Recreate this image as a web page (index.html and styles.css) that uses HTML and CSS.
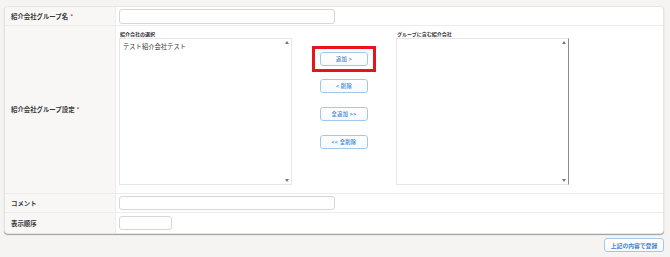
FILE: index.html
```html
<!DOCTYPE html>
<html lang="ja">
<head>
<meta charset="utf-8">
<link rel="stylesheet" href="styles.css">
</head>
<body>
<div class="card">
  <div class="lbl r1">紹介会社グループ名<span class="req">*</span></div>
  <div class="val r1"><div class="input wide"></div></div>

  <div class="lbl r2">紹介会社グループ設定<span class="req">*</span></div>
  <div class="val r2 setting">
    <div class="group">
      <div class="sublbl">紹介会社の選択</div>
      <div class="listbox">
        <div class="items"><div class="item">テスト紹介会社テスト</div></div>
        <div class="sbar"><span class="up"></span><span class="down"></span></div>
      </div>
    </div>
    <div class="mid">
      <div class="hl"><div class="btn">追加 &gt;</div></div>
      <div class="btn b2">&lt; 削除</div>
      <div class="btn b3">全追加 &gt;&gt;</div>
      <div class="btn b3">&lt;&lt; 全削除</div>
    </div>
    <div class="group">
      <div class="sublbl">グループに含む紹介会社</div>
      <div class="listbox dark">
        <div class="items"></div>
        <div class="sbar"><span class="up"></span><span class="down"></span></div>
      </div>
    </div>
  </div>

  <div class="lbl r3">コメント</div>
  <div class="val r3"><div class="input wide short"></div></div>

  <div class="lbl r4 last">表示順序</div>
  <div class="val r4 last"><div class="input small"></div></div>
</div>
<div class="actions"><div class="btn submit">上記の内容で登録</div></div>
</body>
</html>
```
FILE: styles.css
```css
* { box-sizing: border-box; }
body {
  margin: 0;
  background: #f5f4f2;
  font-family: "Noto Sans CJK JP", "Noto Sans", sans-serif;
  color: #333;
}
.card {
  margin: 6px 6px 0 4px;
  background: #fff;
  border: 1px solid #e6e5e3;
  border-radius: 4px;
  box-shadow: 0 1px 1px rgba(0,0,0,0.35);
  display: grid;
  grid-template-columns: 111px 1fr;
  grid-template-rows: 19px 168px 19px 20px;
  overflow: hidden;
}
.lbl {
  background: #f8f7f5;
  border-right: 1px solid #ededed;
  border-bottom: 1px solid #ececec;
  display: flex;
  align-items: center;
  padding-left: 6px;
  font-size: 6.4px;
  font-weight: bold;
  color: #3a3a3a;
}
.req { color: #e04848; margin-left: 2px; font-size: 6px; }
.val {
  border-bottom: 1px solid #ececec;
  display: flex;
  align-items: center;
  padding-left: 3px;
}
.last { border-bottom: none; }
.input {
  border: 1px solid #d6d6d6;
  border-radius: 3px;
  background: #fff;
  height: 15px;
}
.wide { width: 216px; }
.short { height: 14px; }
.small { width: 53px; height: 14px; }

.setting { align-items: flex-start; }
.group { display: flex; flex-direction: column; padding-top: 4px; }
.sublbl {
  font-size: 5px;
  font-weight: bold;
  line-height: 7px;
  height: 8px;
  padding-left: 1px;
  color: #333;
}
.listbox {
  width: 173px;
  height: 147px;
  border: 1px solid #e6e6e6;
  display: flex;
  background: #fff;
}
.listbox.dark { border-right: 1px solid #8c8c8c; }
.items { flex: 1; padding: 3px 0 0 3px; }
.item { font-size: 6.3px; line-height: 9px; color: #333; }
.sbar {
  width: 8px;
  display: flex;
  flex-direction: column;
  justify-content: space-between;
  align-items: center;
  padding: 2px 0 2px;
}
.up, .down {
  width: 0; height: 0;
  border-left: 2.5px solid transparent;
  border-right: 2.5px solid transparent;
}
.up { border-bottom: 3px solid #777; }
.down { border-top: 3px solid #777; }

.mid {
  width: 104px;
  display: flex;
  flex-direction: column;
  align-items: center;
  padding-top: 20px;
}
.hl {
  border: 3px solid #e8141c;
  padding: 3px 5px;
  width: 64px;
  height: 26px;
}
.btn {
  width: 48px;
  height: 14px;
  border: 1px solid #a3c9ea;
  border-radius: 3px;
  background: linear-gradient(#ffffff, #f7fafd);
  color: #3a86cc;
  font-size: 5.3px;
  font-weight: 500;
  display: flex;
  align-items: center;
  justify-content: center;
  letter-spacing: 0.3px;
}
.b2 { margin-top: 7px; }
.b3 { margin-top: 14px; }
.actions {
  display: flex;
  justify-content: flex-end;
  margin: 4px 6px 0 0;
}
.submit { width: 60px; font-size: 5.8px; font-weight: bold; letter-spacing: 0; }
```
